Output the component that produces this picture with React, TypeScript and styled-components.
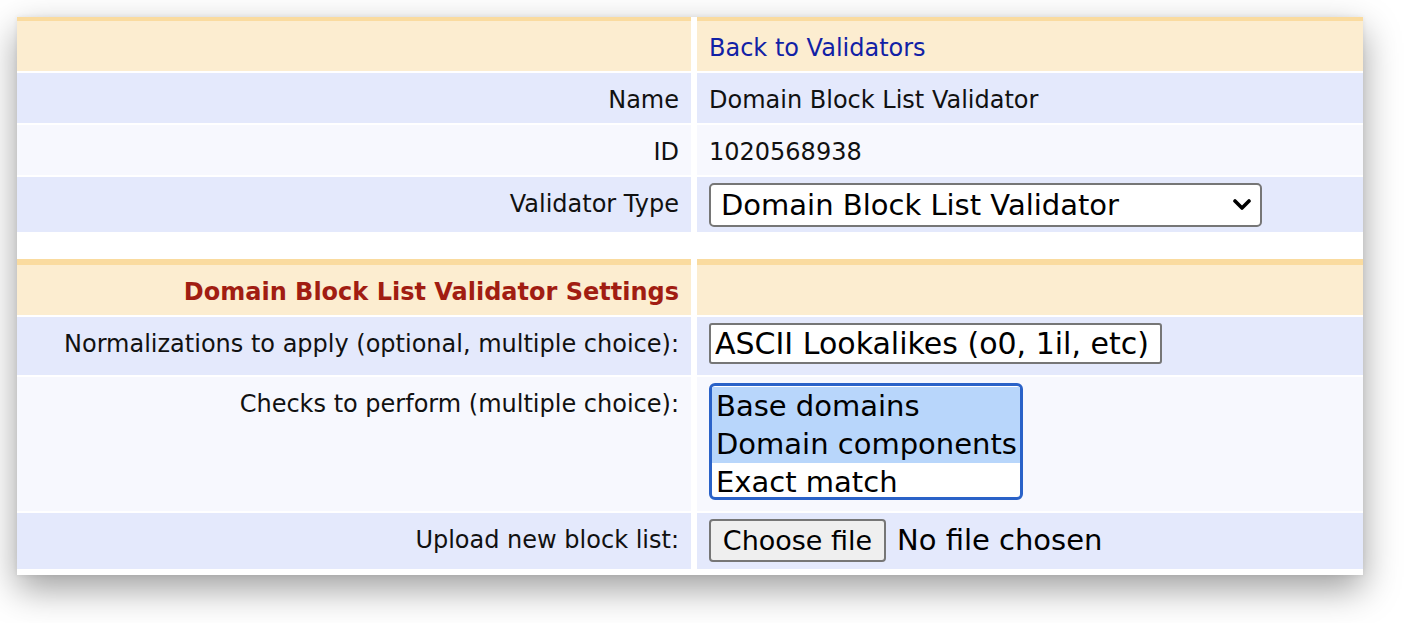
import React from 'react';
import styled, { createGlobalStyle } from 'styled-components';

const GlobalStyle = createGlobalStyle`
  html, body {
    margin: 0;
    background: #ffffff;
    font-family: 'DejaVu Sans', Verdana, sans-serif;
  }
`;

type Tone = 'head' | 'a' | 'b';

const tones: Record<Tone, string> = {
  head: '#fcedd0',
  a: '#e4e9fc',
  b: '#f7f8fe',
};

const Page = styled.div`
  box-sizing: border-box;
  min-height: 623px;
  padding: 17px 0 48px 17px;
`;

const Panel = styled.div`
  width: 1346px;
  padding-bottom: 6px;
  background: #ffffff;
  box-shadow: 0 14px 34px rgba(0, 0, 0, 0.38), 0 0 5px rgba(0, 0, 0, 0.07);
  display: flex;
  flex-direction: column;
  gap: 27px;
`;

const Section = styled.div`
  display: flex;
  flex-direction: column;
  gap: 2px;
`;

const Row = styled.div<{ $h: number; $border?: number }>`
  display: grid;
  grid-template-columns: 674px 666px;
  grid-auto-rows: ${({ $h, $border }) => $h + ($border || 0)}px;
  column-gap: 6px;
`;

const Cell = styled.div<{ $tone: Tone; $border?: number }>`
  box-sizing: border-box;
  padding: 8px 12px 6px;
  background: ${({ $tone }) => tones[$tone]};
  border-top: ${({ $border }) => ($border ? `${$border}px solid #fadb9f` : 'none')};
  font-size: 24px;
  line-height: 38px;
  color: #111111;
`;

const LabelCell = styled(Cell)`
  text-align: right;
`;

const ValueCell = styled(Cell)<{ $control?: boolean }>`
  display: flex;
  align-items: flex-start;
  padding-top: ${({ $control }) => ($control ? 6 : 8)}px;
`;

const BackLink = styled.a`
  color: #1121a6;
  text-decoration: none;
  cursor: pointer;
`;

const SectionTitle = styled.span`
  color: #a11d12;
  font-weight: bold;
`;

const SelectBox = styled.div<{ $w: number; $h: number; $radius: number; $pad: number; $size: number }>`
  box-sizing: border-box;
  width: ${({ $w }) => $w}px;
  height: ${({ $h }) => $h}px;
  border: 2px solid #767676;
  border-radius: ${({ $radius }) => $radius}px;
  background: #ffffff;
  display: flex;
  align-items: center;
  justify-content: space-between;
  padding: 0 9px 0 ${({ $pad }) => $pad}px;
  font-size: ${({ $size }) => $size}px;
  line-height: 1;
  color: #000000;
  white-space: nowrap;
  overflow: hidden;
`;

const Chevron = () => (
  <svg width="18" height="12" viewBox="0 0 18 12">
    <path d="M2 2 L9 9 L16 2" fill="none" stroke="#000" strokeWidth="3.6" strokeLinecap="round" strokeLinejoin="round" />
  </svg>
);

const ListBox = styled.div`
  box-sizing: border-box;
  width: 314px;
  height: 117px;
  border: 3px solid #2a62c8;
  border-radius: 6px;
  background: #ffffff;
  overflow: hidden;
  display: flex;
  flex-direction: column;
  padding: 1px 0;
`;

const Option = styled.div<{ $selected?: boolean }>`
  height: 38px;
  line-height: 38px;
  padding-left: 4px;
  font-size: 29px;
  color: #000000;
  white-space: nowrap;
  background: ${({ $selected }) => ($selected ? '#b8d6fb' : 'transparent')};
`;

const FileButton = styled.button`
  box-sizing: border-box;
  width: 177px;
  height: 43px;
  border: 2px solid #767676;
  border-radius: 4px;
  background: #efefef;
  font-family: 'DejaVu Sans', Verdana, sans-serif;
  font-size: 27px;
  color: #000000;
  padding: 0;
  line-height: 1;
`;

const FileStatus = styled.span`
  margin-left: 11px;
  font-size: 29px;
  line-height: 43px;
  color: #000000;
`;

export default function App() {
  return (
    <>
      <GlobalStyle />
      <Page>
        <Panel>
          <Section>
            <Row $h={50} $border={4}>
              <LabelCell $tone="head" $border={4} />
              <ValueCell $tone="head" $border={4}>
                <BackLink>Back to Validators</BackLink>
              </ValueCell>
            </Row>
            <Row $h={50}>
              <LabelCell $tone="a">Name</LabelCell>
              <ValueCell $tone="a">Domain Block List Validator</ValueCell>
            </Row>
            <Row $h={50}>
              <LabelCell $tone="b">ID</LabelCell>
              <ValueCell $tone="b">1020568938</ValueCell>
            </Row>
            <Row $h={55}>
              <LabelCell $tone="a">Validator Type</LabelCell>
              <ValueCell $tone="a" $control>
                <SelectBox $w={553} $h={44} $radius={5} $pad={10} $size={29}>
                  <span>Domain Block List Validator</span>
                  <Chevron />
                </SelectBox>
              </ValueCell>
            </Row>
          </Section>
          <Section>
            <Row $h={50} $border={6}>
              <LabelCell $tone="head" $border={6}>
                <SectionTitle>Domain Block List Validator Settings</SectionTitle>
              </LabelCell>
              <ValueCell $tone="head" $border={6} />
            </Row>
            <Row $h={58}>
              <LabelCell $tone="a">Normalizations to apply (optional, multiple choice):</LabelCell>
              <ValueCell $tone="a" $control>
                <SelectBox $w={453} $h={41} $radius={3} $pad={4} $size={30}>
                  <span>ASCII Lookalikes (o0, 1il, etc)</span>
                </SelectBox>
              </ValueCell>
            </Row>
            <Row $h={134}>
              <LabelCell $tone="b">Checks to perform (multiple choice):</LabelCell>
              <ValueCell $tone="b" $control>
                <ListBox>
                  <Option $selected>Base domains</Option>
                  <Option $selected>Domain components</Option>
                  <Option>Exact match</Option>
                </ListBox>
              </ValueCell>
            </Row>
            <Row $h={56}>
              <LabelCell $tone="a">Upload new block list:</LabelCell>
              <ValueCell $tone="a" $control>
                <FileButton>Choose file</FileButton>
                <FileStatus>No file chosen</FileStatus>
              </ValueCell>
            </Row>
          </Section>
        </Panel>
      </Page>
    </>
  );
}
